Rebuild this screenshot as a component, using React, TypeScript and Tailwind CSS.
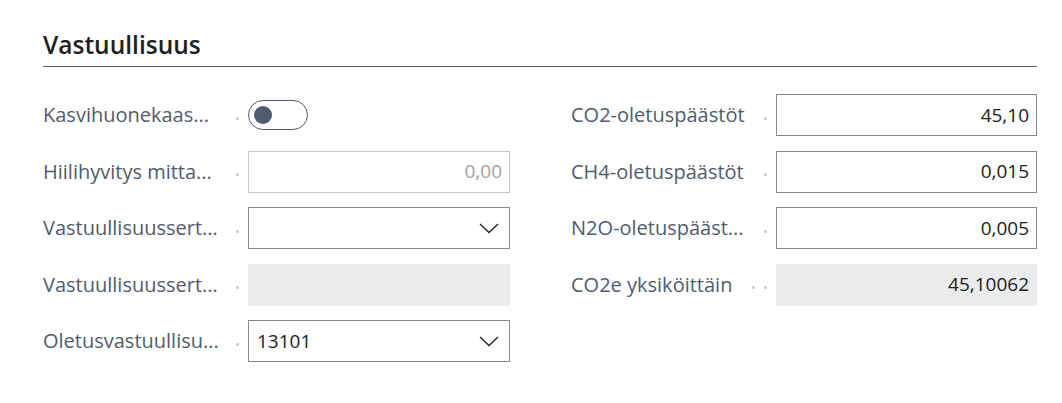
const font = { fontFamily: '"Open Sans", "Noto Sans", sans-serif' };

function Dots({ count = 1 }: { count?: number }) {
  return (
    <div className="mr-[9px] flex translate-y-[3px] items-center gap-[9px]">
      {Array.from({ length: count }).map((_, i) => (
        <span key={i} className="block h-[3px] w-[3px] rounded-full bg-[#c8c8c8]" />
      ))}
    </div>
  );
}

function Label({ text, dots = 1 }: { text: string; dots?: number }) {
  return (
    <div className="flex w-[205px] shrink-0 items-center justify-between">
      <span className="whitespace-nowrap text-[20px] leading-[26px] text-[#505c6d]">
        {text}
      </span>
      <Dots count={dots} />
    </div>
  );
}

function Chevron() {
  return (
    <svg width="20" height="11" viewBox="0 0 20 11" fill="none" className="shrink-0">
      <polyline points="1,1 10,9.5 19,1" stroke="#212121" strokeWidth="1.3" />
    </svg>
  );
}

type Field =
  | { kind: "toggle" }
  | { kind: "number"; value: string }
  | { kind: "disabled"; value: string }
  | { kind: "select"; value: string }
  | { kind: "readonly"; value: string };

function Control({ field }: { field: Field }) {
  switch (field.kind) {
    case "toggle":
      return (
        <div className="flex h-[42px] items-center">
          <div className="flex h-[30px] w-[60px] items-center rounded-full border-[1.5px] border-[#505c6d] pl-[5px]">
            <span className="block h-[18px] w-[18px] rounded-full bg-[#505c6d]" />
          </div>
        </div>
      );
    case "number":
      return (
        <div className="flex h-[42px] w-[262px] items-center justify-end border border-[#8a8886] bg-white pr-[7px] text-[19px] text-[#212121]">
          {field.value}
        </div>
      );
    case "disabled":
      return (
        <div className="flex h-[42px] w-[262px] items-center justify-end border border-[#c8c8c8] bg-white pr-[7px] text-[19px] text-[#a19f9d]">
          {field.value}
        </div>
      );
    case "readonly":
      return (
        <div className="flex h-[42px] w-[262px] items-center justify-end bg-[#ebeced] pr-[8px] text-[19px] text-[#212121]">
          {field.value}
        </div>
      );
    case "select":
      return (
        <div className="flex h-[42px] w-[262px] items-center justify-between border border-[#8a8886] bg-white pl-[8px] pr-[10px] text-[19px] text-[#212121]">
          <span>{field.value}</span>
          <Chevron />
        </div>
      );
  }
}

const left: { label: string; field: Field }[] = [
  { label: "Kasvihuonekaas...", field: { kind: "toggle" } },
  { label: "Hiilihyvitys mitta...", field: { kind: "disabled", value: "0,00" } },
  { label: "Vastuullisuussert...", field: { kind: "select", value: "" } },
  { label: "Vastuullisuussert...", field: { kind: "readonly", value: "" } },
  { label: "Oletusvastuullisu...", field: { kind: "select", value: "13101" } },
];

const right: { label: string; field: Field; dots?: number }[] = [
  { label: "CO2-oletuspäästöt", field: { kind: "number", value: "45,10" } },
  { label: "CH4-oletuspäästöt", field: { kind: "number", value: "0,015" } },
  { label: "N2O-oletuspääst...", field: { kind: "number", value: "0,005" } },
  { label: "CO2e yksiköittäin", field: { kind: "readonly", value: "45,10062" }, dots: 2 },
];

export default function App() {
  return (
    <div className="h-[403px] w-[1062px] bg-white pl-[43px] pr-[25px] pt-[29px]" style={font}>
      <div className="border-b border-[#505c6d] pb-[5px]">
        <h2 className="text-[24.5px] font-semibold leading-[32px] text-[#212121]">Vastuullisuus</h2>
      </div>

      <div className="mt-[27px] flex gap-[61px]">
        <div className="flex w-[467px] flex-col gap-[14.5px]">
          {left.map((row, i) => (
            <div key={i} className="flex h-[42px] items-center">
              <Label text={row.label} />
              <Control field={row.field} />
            </div>
          ))}
        </div>
        <div className="flex w-[466px] flex-col gap-[14.5px]">
          {right.map((row, i) => (
            <div key={i} className="flex h-[42px] items-center">
              <Label text={row.label} dots={row.dots} />
              <Control field={row.field} />
            </div>
          ))}
        </div>
      </div>
    </div>
  );
}
